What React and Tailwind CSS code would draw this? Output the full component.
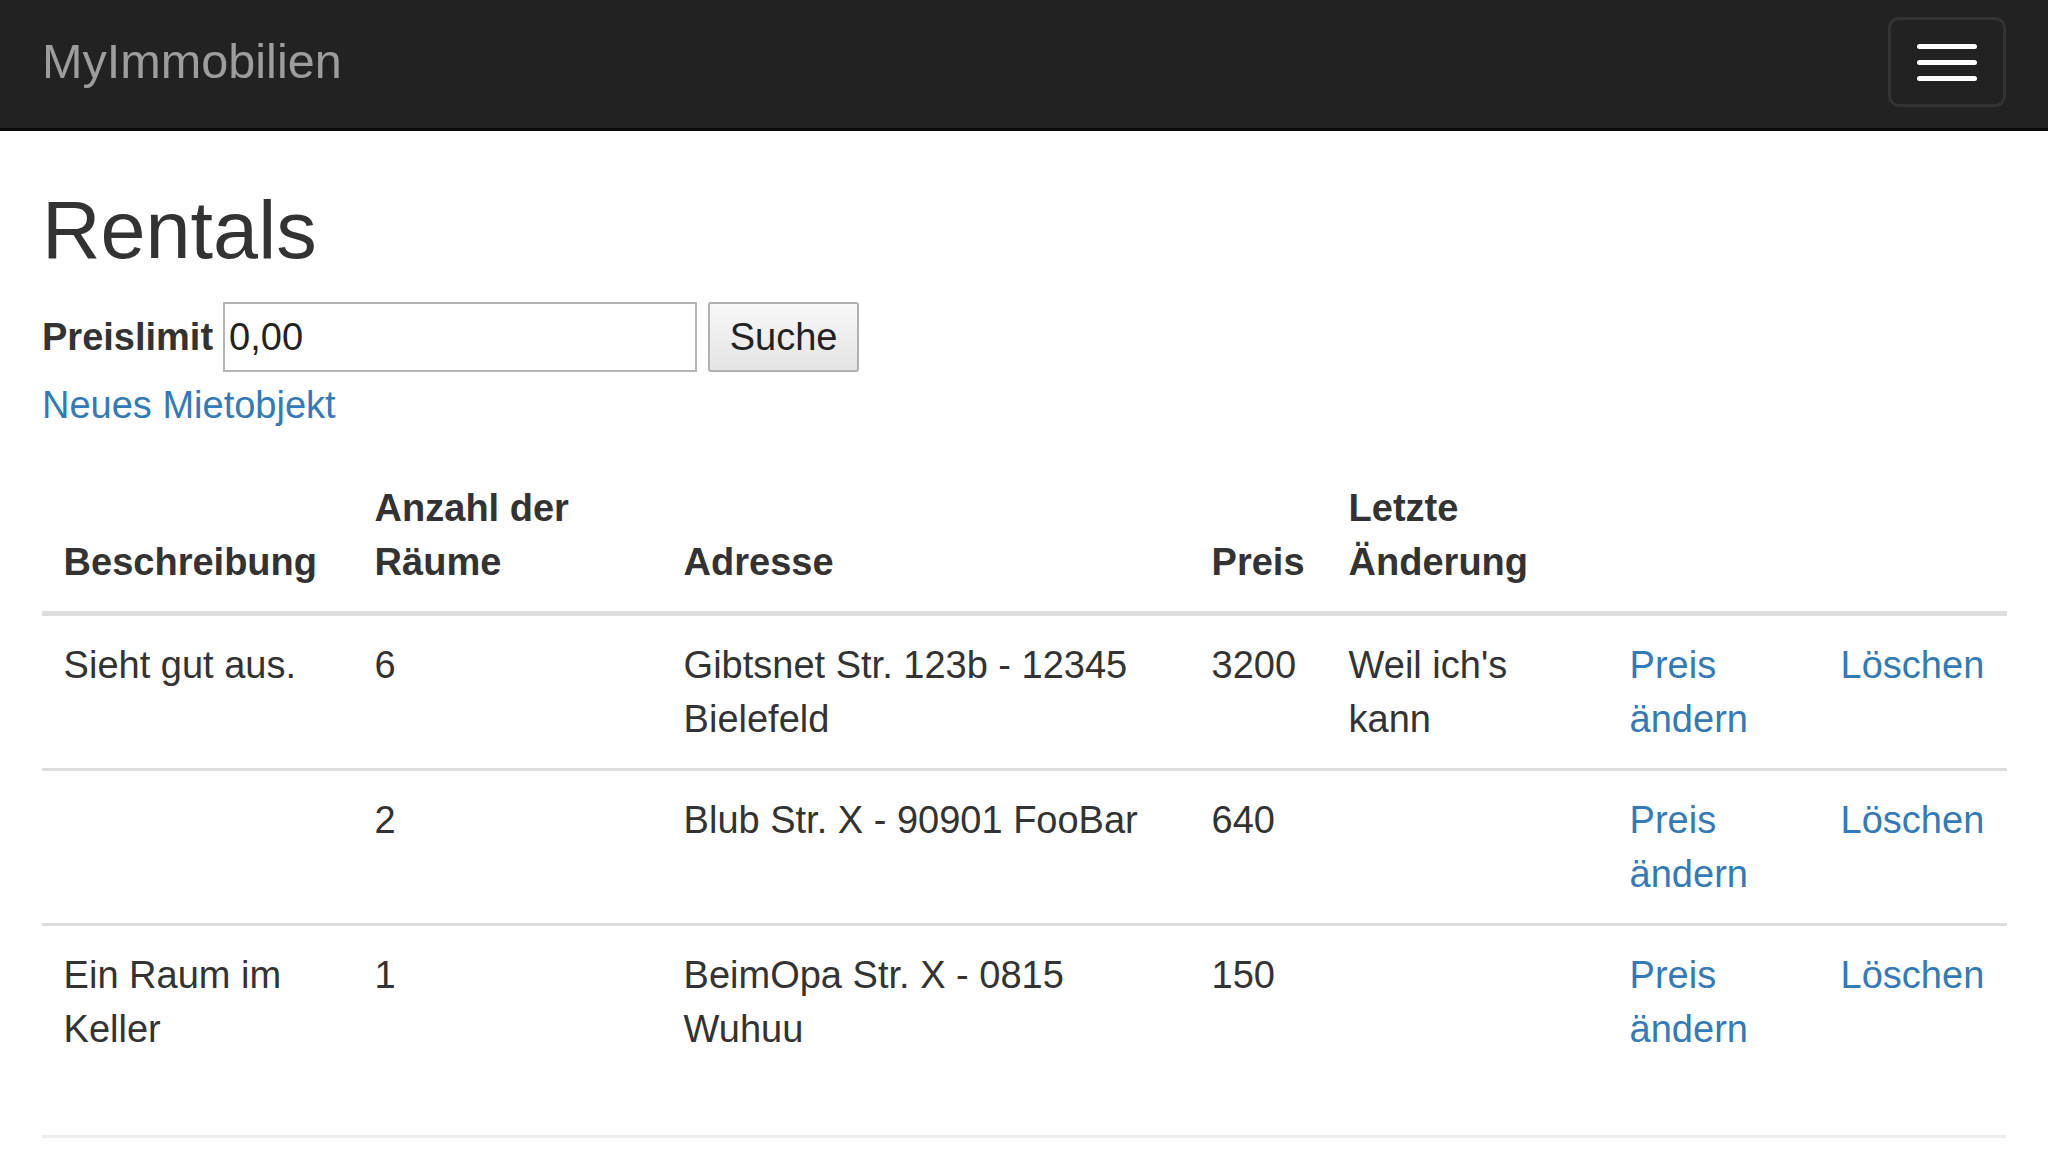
import React from 'react';

const rentals = [
  { desc: 'Sieht gut aus.', rooms: '6', address: 'Gibtsnet Str. 123b - 12345 Bielefeld', price: '3200', note: "Weil ich's kann" },
  { desc: '', rooms: '2', address: 'Blub Str. X - 90901 FooBar', price: '640', note: '' },
  { desc: 'Ein Raum im Keller', rooms: '1', address: 'BeimOpa Str. X - 0815 Wuhuu', price: '150', note: '' },
];

const Navbar = () => (
  <nav className="h-[131px] bg-[#222222] border-b-[3px] border-[#080808] flex items-center justify-between px-[42px]">
    <a href="#" className="-mt-[5px] text-[48.6px] leading-none text-[#9d9d9d]">MyImmobilien</a>
    <button
      type="button"
      className="w-[118px] h-[90px] border-[3px] border-[#333333] rounded-[11px] flex flex-col items-center justify-center gap-[11px] -mt-[4px]"
    >
      <span className="block w-[60px] h-[5px] rounded-full bg-white" />
      <span className="block w-[60px] h-[5px] rounded-full bg-white" />
      <span className="block w-[60px] h-[5px] rounded-full bg-white" />
    </button>
  </nav>
);

const Th = ({ children, className = '' }) => (
  <th className={`text-left align-bottom font-bold px-[21.6px] py-[22px] border-b-[5px] border-[#dddddd] ${className}`}>
    {children}
  </th>
);

const Td = ({ children, className = '' }) => (
  <td className={`align-top px-[21.6px] py-[22px] border-t-[3px] border-[#dddddd] ${className}`}>
    {children}
  </td>
);

const App = () => {
  return (
    <div
      className="min-h-screen bg-white text-[#333333] text-[38px] leading-[54px]"
      style={{ fontFamily: '"Liberation Sans", Arial, Helvetica, sans-serif' }}
    >
      <Navbar />

      <div className="px-[42px] pt-[55px]">
        <h2 className="text-[81px] leading-[89px] font-medium">Rentals</h2>

        <form className="mt-[27px] flex items-center" onSubmit={(e) => e.preventDefault()}>
          <label htmlFor="limit" className="font-bold">Preislimit</label>
          <input
            id="limit"
            type="text"
            defaultValue="0,00"
            className="ml-[10px] w-[474px] h-[70px] border-2 border-[#b4b4b4] bg-white px-[4px] text-[38px] text-[#222222] outline-none"
          />
          <button
            type="submit"
            className="ml-[11px] w-[151px] h-[70px] border-2 border-[#b0b0b0] rounded-[3px] bg-gradient-to-b from-[#f8f8f8] to-[#e4e4e4] text-[38px] text-[#222222]"
          >
            Suche
          </button>
        </form>

        <p className="mt-[6px]">
          <a href="#" className="text-[#337ab7]">Neues Mietobjekt</a>
        </p>

        <table className="mt-[27px] w-full table-fixed border-collapse">
          <colgroup>
            <col className="w-[311px]" />
            <col className="w-[309px]" />
            <col className="w-[528px]" />
            <col className="w-[137px]" />
            <col className="w-[281px]" />
            <col className="w-[211px]" />
            <col className="w-[188px]" />
          </colgroup>
          <thead>
            <tr>
              <Th>Beschreibung</Th>
              <Th>Anzahl der Räume</Th>
              <Th>Adresse</Th>
              <Th className="whitespace-nowrap">Preis</Th>
              <Th>Letzte Änderung</Th>
              <Th></Th>
              <Th></Th>
            </tr>
          </thead>
          <tbody>
            {rentals.map((r, i) => (
              <tr key={i}>
                <Td>{r.desc}</Td>
                <Td>{r.rooms}</Td>
                <Td>{r.address}</Td>
                <Td>{r.price}</Td>
                <Td>{r.note}</Td>
                <Td>
                  <a href="#" className="text-[#337ab7]">Preis ändern</a>
                </Td>
                <Td className="whitespace-nowrap">
                  <a href="#" className="text-[#337ab7]">Löschen</a>
                </Td>
              </tr>
            ))}
          </tbody>
        </table>

        <hr className="mt-[57px] border-0 border-t-[3px] border-[#eeeeee]" />
      </div>
    </div>
  );
};

export default App;
